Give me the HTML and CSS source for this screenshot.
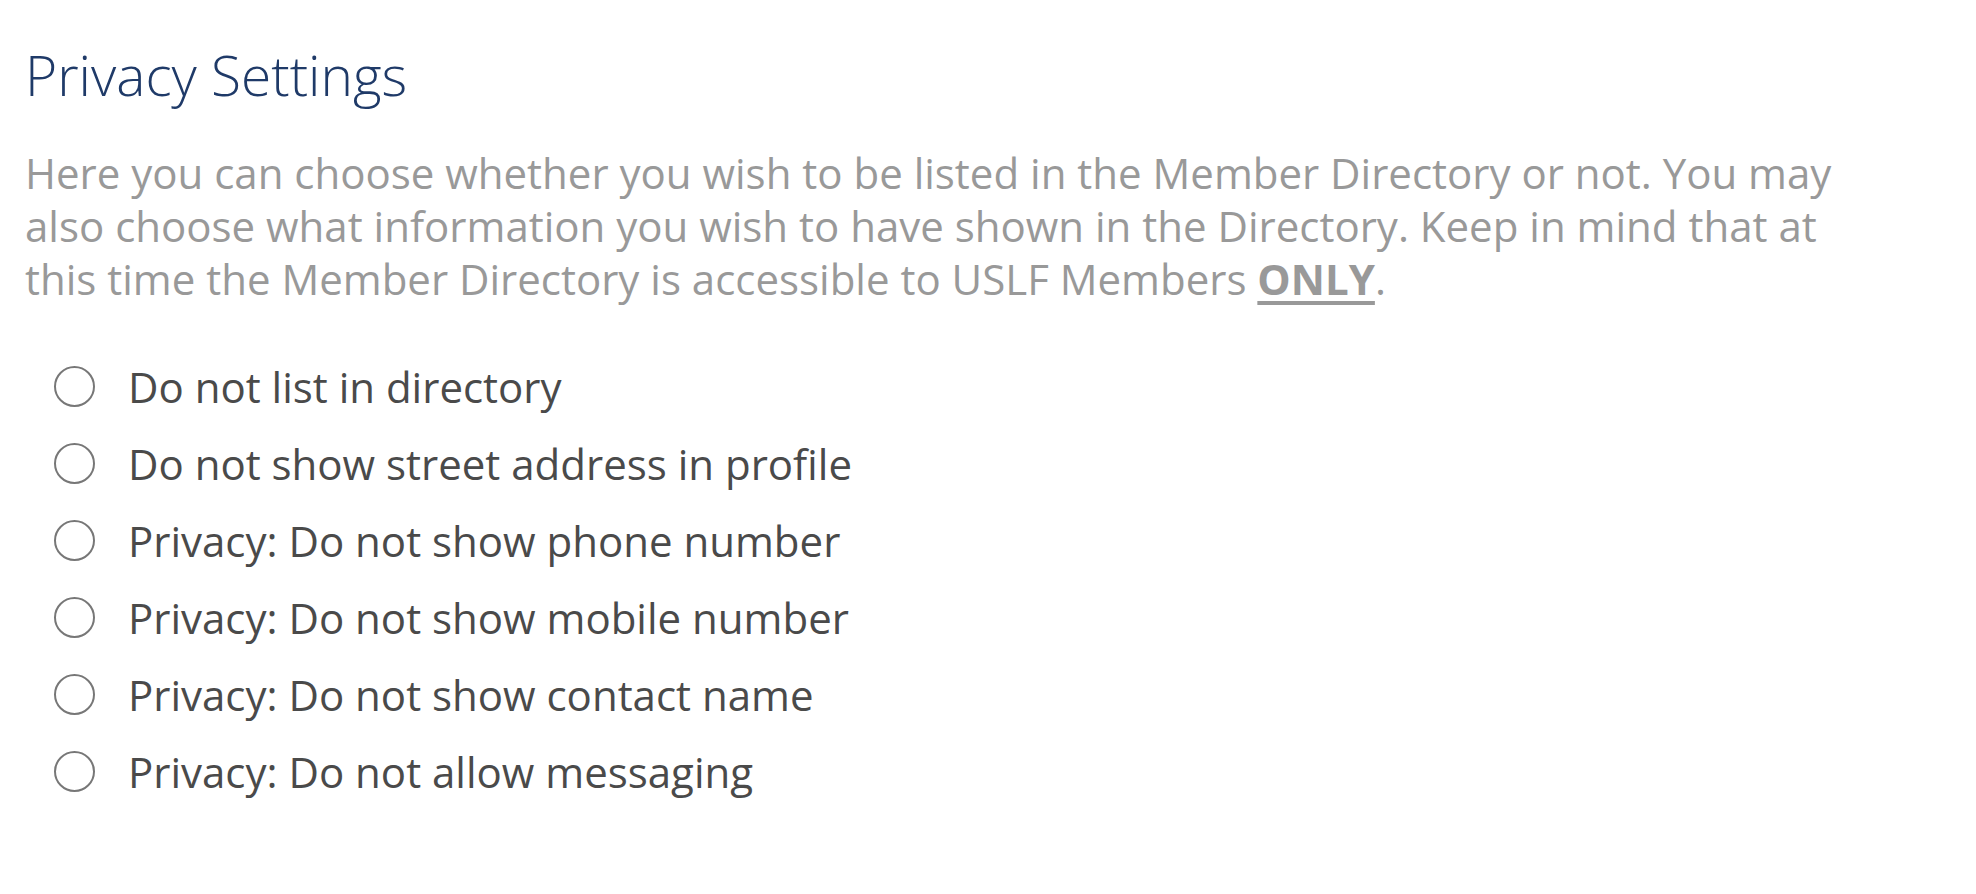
FILE: index.html
```html
<!DOCTYPE html>
<html lang="en">
<head>
<meta charset="utf-8">
<title>Privacy Settings</title>
<link rel="stylesheet" href="styles.css">
</head>
<body>
<main class="page">
  <h1 class="title">Privacy Settings</h1>
  <p class="intro">Here you can choose whether you wish to be listed in the Member Directory or not. You may also choose what information you wish to have shown in the Directory. Keep in mind that at this time the Member Directory is accessible to USLF Members <strong class="only">ONLY</strong>.</p>
  <ul class="options">
    <li class="option"><label class="option-label"><input class="radio" type="radio" name="privacy"><span>Do not list in directory</span></label></li>
    <li class="option"><label class="option-label"><input class="radio" type="radio" name="privacy"><span>Do not show street address in profile</span></label></li>
    <li class="option"><label class="option-label"><input class="radio" type="radio" name="privacy"><span>Privacy: Do not show phone number</span></label></li>
    <li class="option"><label class="option-label"><input class="radio" type="radio" name="privacy"><span>Privacy: Do not show mobile number</span></label></li>
    <li class="option"><label class="option-label"><input class="radio" type="radio" name="privacy"><span>Privacy: Do not show contact name</span></label></li>
    <li class="option"><label class="option-label"><input class="radio" type="radio" name="privacy"><span>Privacy: Do not allow messaging</span></label></li>
  </ul>
</main>
</body>
</html>
```
FILE: styles.css
```css
html, body {
  margin: 0;
  padding: 0;
  background: #ffffff;
}

body {
  font-family: "Open Sans", Lato, "Liberation Sans", sans-serif;
}

.page {
  padding: 45px 25px 0 25px;
  width: 1880px;
  box-sizing: border-box;
}

.title {
  margin: 0;
  font-size: 55px;
  line-height: 60px;
  font-weight: 300;
  color: #1f3a68;
}

.intro {
  margin: 41px 0 0 0;
  font-size: 42px;
  line-height: 53px;
  font-weight: 400;
  color: #999999;
}

.only {
  font-weight: 700;
  text-decoration: underline;
  text-decoration-thickness: 4px;
  text-underline-offset: 6px;
}

.options {
  list-style: none;
  margin: 43px 0 0 0;
  padding: 0;
}

.option {
  height: 77px;
  display: flex;
  align-items: center;
}

.option-label {
  display: flex;
  align-items: center;
  gap: 33px;
  font-size: 42px;
  line-height: 77px;
  color: #4a4a4a;
  padding-left: 29px;
}

.radio {
  appearance: none;
  -webkit-appearance: none;
  margin: 0;
  width: 41px;
  height: 41px;
  border: 2.5px solid #777777;
  border-radius: 50%;
  box-sizing: border-box;
  flex: none;
}
```
